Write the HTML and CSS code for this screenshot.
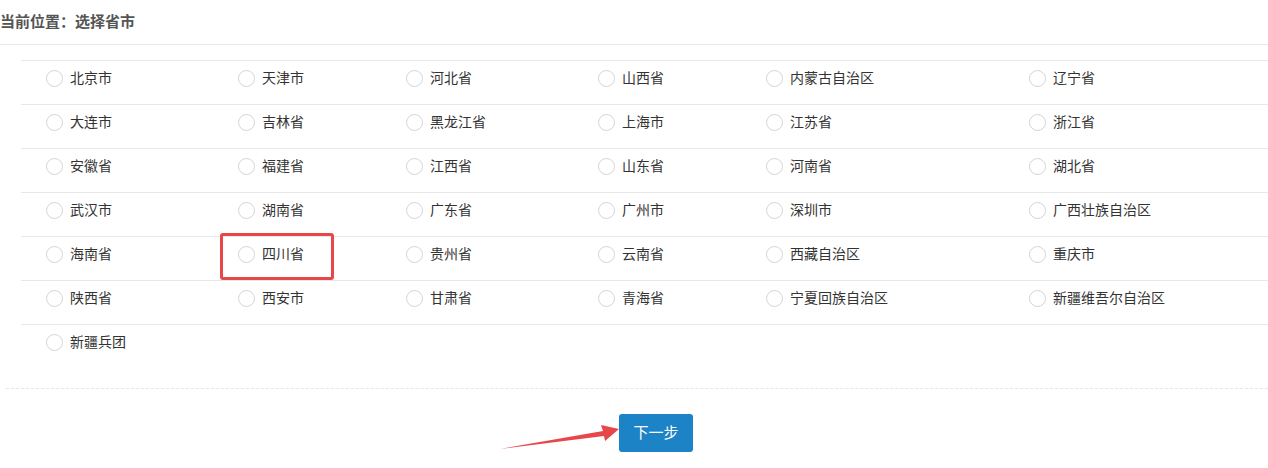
FILE: index.html
```html
<!DOCTYPE html>
<html>
    <head>
        <title>选择省市</title>
        <meta charset="utf-8"/>
        <link rel="stylesheet" href="styles.css">
    </head>
    <body>
        <div class="crumb">当前位置：选择省市</div>
        <div class="area">
            <div class="row">
                <label class="cell"><span class="radio"></span>北京市</label>
                <label class="cell"><span class="radio"></span>天津市</label>
                <label class="cell"><span class="radio"></span>河北省</label>
                <label class="cell"><span class="radio"></span>山西省</label>
                <label class="cell"><span class="radio"></span>内蒙古自治区</label>
                <label class="cell"><span class="radio"></span>辽宁省</label>
            </div>
            <div class="row">
                <label class="cell"><span class="radio"></span>大连市</label>
                <label class="cell"><span class="radio"></span>吉林省</label>
                <label class="cell"><span class="radio"></span>黑龙江省</label>
                <label class="cell"><span class="radio"></span>上海市</label>
                <label class="cell"><span class="radio"></span>江苏省</label>
                <label class="cell"><span class="radio"></span>浙江省</label>
            </div>
            <div class="row">
                <label class="cell"><span class="radio"></span>安徽省</label>
                <label class="cell"><span class="radio"></span>福建省</label>
                <label class="cell"><span class="radio"></span>江西省</label>
                <label class="cell"><span class="radio"></span>山东省</label>
                <label class="cell"><span class="radio"></span>河南省</label>
                <label class="cell"><span class="radio"></span>湖北省</label>
            </div>
            <div class="row">
                <label class="cell"><span class="radio"></span>武汉市</label>
                <label class="cell"><span class="radio"></span>湖南省</label>
                <label class="cell"><span class="radio"></span>广东省</label>
                <label class="cell"><span class="radio"></span>广州市</label>
                <label class="cell"><span class="radio"></span>深圳市</label>
                <label class="cell"><span class="radio"></span>广西壮族自治区</label>
            </div>
            <div class="row">
                <label class="cell"><span class="radio"></span>海南省</label>
                <label class="cell"><span class="radio"></span>四川省</label>
                <label class="cell"><span class="radio"></span>贵州省</label>
                <label class="cell"><span class="radio"></span>云南省</label>
                <label class="cell"><span class="radio"></span>西藏自治区</label>
                <label class="cell"><span class="radio"></span>重庆市</label>
            </div>
            <div class="row">
                <label class="cell"><span class="radio"></span>陕西省</label>
                <label class="cell"><span class="radio"></span>西安市</label>
                <label class="cell"><span class="radio"></span>甘肃省</label>
                <label class="cell"><span class="radio"></span>青海省</label>
                <label class="cell"><span class="radio"></span>宁夏回族自治区</label>
                <label class="cell"><span class="radio"></span>新疆维吾尔自治区</label>
            </div>
            <div class="row last">
                <label class="cell"><span class="radio"></span>新疆兵团</label>
            </div>
        </div>
        <div class="actions">
            <a href="#" class="btn">下一步</a>
        </div>

        <div class="mark"></div>
        <svg class="arrow" width="130" height="34" viewBox="495 420 130 34">
            <polygon points="500,449 603,431 601,425 619,429 605,441 604,436" fill="#e8474a"/>
        </svg>
    </body>
</html>
```

FILE: styles.css
```css
*{
    margin: 0;
    padding: 0;
    box-sizing: border-box;
}
body{
    font-family: "Liberation Sans", "Noto Sans CJK SC", sans-serif;
    font-size: 14px;
    color: #333;
    background-color: #fff;
}
.crumb{
    height: 45px;
    line-height: 44px;
    border-bottom: 1px solid #e8e8e8;
    font-size: 15px;
    font-weight: bold;
    color: #555;
}
.area{
    margin: 15px 0 0 21px;
}
.area .row{
    display: grid;
    grid-template-columns: 192px 168px 192px 168px 263px 1fr;
    height: 44px;
    border-top: 1px solid #e8e8e8;
}
.area .row.last{
    height: 64px;
}
.area .cell{
    display: flex;
    align-items: center;
    height: 20px;
    margin-top: 7px;
    padding-left: 25px;
    line-height: 20px;
    cursor: pointer;
}
.area .radio{
    width: 17px;
    height: 17px;
    border: 1px solid #d4d4d4;
    border-radius: 50%;
    margin-right: 7px;
}
.actions{
    margin-left: 6px;
    border-top: 1px dashed #e6e6e6;
    padding: 25px 0 0 613px;
}
.btn{
    display: inline-block;
    width: 74px;
    height: 38px;
    line-height: 38px;
    text-align: center;
    background-color: #1c83c6;
    color: #fff;
    font-size: 15px;
    border-radius: 3px;
    text-decoration: none;
}
/* annotations */
.mark{
    position: absolute;
    left: 220px;
    top: 233px;
    width: 114px;
    height: 47px;
    border: 3px solid #e8474a;
    border-radius: 3px;
}
.arrow{
    position: absolute;
    left: 495px;
    top: 420px;
}
```
